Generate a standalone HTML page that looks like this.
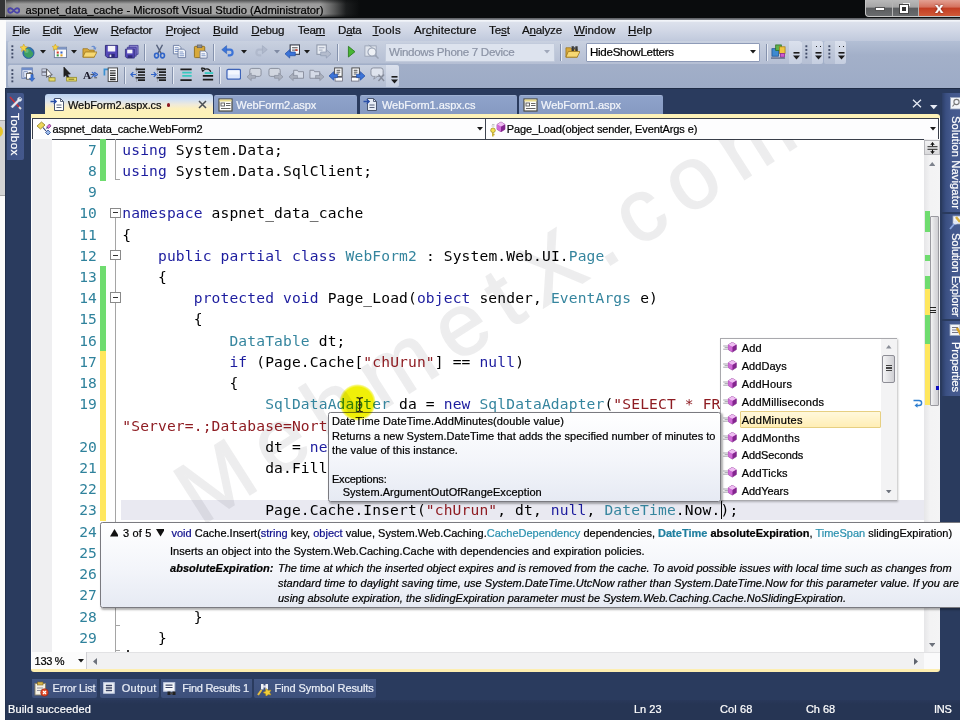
<!DOCTYPE html>
<html lang="en"><head><meta charset="utf-8">
<title>aspnet_data_cache - Microsoft Visual Studio (Administrator)</title>
<style>

html,body{margin:0;padding:0}
body{width:960px;height:720px;overflow:hidden;position:relative;background:#2a3b5e;font-family:"Liberation Sans","DejaVu Sans",sans-serif;font-size:11.5px;color:#000}
.a{position:absolute;box-sizing:border-box}
.t{position:absolute;white-space:pre;display:block;-webkit-text-stroke:.22px}
u{text-decoration:underline;text-underline-offset:1px}
.code{position:absolute;white-space:pre;font-family:"DejaVu Sans Mono","Liberation Mono",monospace;font-size:14.6px;letter-spacing:0.141px;color:#000;height:21.22px;line-height:21.22px;left:122.3px}
.ln{position:absolute;white-space:pre;font-family:"DejaVu Sans Mono","Liberation Mono",monospace;font-size:14.6px;letter-spacing:0.141px;color:#2f829c;height:21.22px;line-height:21.22px;left:60px;width:37px;text-align:right}
.k{color:#1c1c9e}.c{color:#35859e}.s{color:#8e1c22}
.tip{font-size:11.3px}
.bi{font-weight:bold;font-style:italic}
.i{font-style:italic}
.b{font-weight:bold}
.kw{color:#10108c}.ty{color:#2b91af}

</style></head>
<body>
<div class="a" style="left:0px;top:20.2px;width:6px;height:700px;background:#fbfbfb"></div>
<div class="a" style="left:0px;top:120px;width:5px;height:76px;background:#d4d4d4;border-top:1px solid #aaa;border-bottom:1px solid #aaa"></div>
<div class="a" style="left:-8px;top:125.5px;width:10.5px;height:11px;background:#e8c62c;border-radius:50%"></div>
<div class="a" style="left:5.3px;top:88px;width:1.2px;height:632px;background:#22304d"></div>
<div class="a" style="left:0px;top:0px;width:960px;height:19px;background:#0a0c0d"></div>
<div class="a" style="left:0px;top:0px;width:420px;height:19px;background:linear-gradient(90deg,#6e6e6e 0,#9c9c9c 14px,#a6a6a6 200px,#9c9c9c 320px,#5a5b5b 334px,#1c1e1f 346px,#0a0c0d 360px)"></div>
<div class="a" style="left:0px;top:0px;width:420px;height:19px;background:linear-gradient(180deg,rgba(10,12,13,.55) 0,rgba(10,12,13,0) 4px,rgba(10,12,13,0) 14px,rgba(10,12,13,.6) 17px)"></div>
<svg class="a" style="left:6.8px;top:6px" width="13.5" height="9" viewBox="0 0 13.5 9"><path d="M3.500 2.200c2.700 0 3.800 4.600 6.500 4.600a2.300 2.300 0 0 0 0-4.600c-2.700 0-3.800 4.600-6.500 4.600a2.300 2.300 0 0 1 0-4.600z" fill="none" stroke="#4a44a8" stroke-width="1.900"/></svg>
<span class="t" style="left:25.5px;top:1.8px;height:16px;line-height:16px;font-size:11.2px;color:#000;letter-spacing:0.006px;">aspnet_data_cache - Microsoft Visual Studio (Administrator)</span>
<div class="a" style="left:864.5px;top:0px;width:96px;height:17.3px;background:#b4b4b4;border-left:1.200px solid #c4c4c4;border-bottom:1.200px solid #c4c4c4;border-bottom-left-radius:4px"></div>
<div class="a" style="left:866px;top:0px;width:26px;height:16px;background:linear-gradient(180deg,#b9b9b9 0,#a5a5a5 45%,#5b5d5f 50%,#6a6c6e 100%);border-bottom-left-radius:3px"></div>
<div class="a" style="left:893px;top:0px;width:25px;height:16px;background:linear-gradient(180deg,#b9b9b9 0,#a5a5a5 45%,#5b5d5f 50%,#6a6c6e 100%)"></div>
<div class="a" style="left:919px;top:0px;width:41px;height:16px;background:linear-gradient(180deg,#e3a092 0,#d4705c 45%,#c23c22 50%,#d05a38 100%)"></div>
<div class="a" style="left:875px;top:7px;width:10px;height:4px;background:#fff;border:1px solid #555"></div>
<div class="a" style="left:899.5px;top:5px;width:8px;height:8px;border:2px solid #fff;outline:1px solid #444;background:#333"></div>
<div class="a" style="left:902.5px;top:2.5px;width:7px;height:3px;border-top:1.5px solid #eee;border-right:1.5px solid #eee"></div>
<span class="t" style="left:935px;top:0.5px;height:14px;line-height:14px;font-size:15px;color:#fff;font-weight:bold;text-shadow:0 0 2px #400;">x</span>
<div class="a" style="left:0px;top:17px;width:960px;height:1.5px;background:#0a0c0d"></div>
<div class="a" style="left:0px;top:18.4px;width:960px;height:1.9px;background:linear-gradient(180deg,#55585b,#8b8f94)"></div>
<div class="a" style="left:0px;top:0px;width:4.5px;height:17.3px;background:#343536"></div>
<div class="a" style="left:4.5px;top:0px;width:1.2px;height:17.3px;background:#9a9a9a"></div>
<div class="a" style="left:5.5px;top:20.2px;width:954.5px;height:20.8px;background:linear-gradient(180deg,#f4f6fa 0,#eef1f7 1.300px,#dce1ec 2.500px,#d3d9e7 45%,#c0c9dc 100%)"></div>
<span class="t" style="left:12.4px;top:22px;height:16px;line-height:16px;font-size:11.6px;color:#101010;letter-spacing:-0.300px;"><u>F</u>ile</span>
<span class="t" style="left:42.6px;top:22px;height:16px;line-height:16px;font-size:11.6px;color:#101010;letter-spacing:-0.296px;"><u>E</u>dit</span>
<span class="t" style="left:73.9px;top:22px;height:16px;line-height:16px;font-size:11.6px;color:#101010;letter-spacing:-0.259px;"><u>V</u>iew</span>
<span class="t" style="left:110.7px;top:22px;height:16px;line-height:16px;font-size:11.6px;color:#101010;letter-spacing:-0.291px;"><u>R</u>efactor</span>
<span class="t" style="left:165.7px;top:22px;height:16px;line-height:16px;font-size:11.6px;color:#101010;letter-spacing:-0.300px;"><u>P</u>roject</span>
<span class="t" style="left:213px;top:22px;height:16px;line-height:16px;font-size:11.6px;color:#101010;letter-spacing:-0.159px;"><u>B</u>uild</span>
<span class="t" style="left:251.3px;top:22px;height:16px;line-height:16px;font-size:11.6px;color:#101010;letter-spacing:-0.254px;"><u>D</u>ebug</span>
<span class="t" style="left:297.7px;top:22px;height:16px;line-height:16px;font-size:11.6px;color:#101010;letter-spacing:-0.269px;">Tea<u>m</u></span>
<span class="t" style="left:338px;top:22px;height:16px;line-height:16px;font-size:11.6px;color:#101010;letter-spacing:-0.250px;">D<u>a</u>ta</span>
<span class="t" style="left:372.5px;top:22px;height:16px;line-height:16px;font-size:11.6px;color:#101010;letter-spacing:0.300px;"><u>T</u>ools</span>
<span class="t" style="left:414px;top:22px;height:16px;line-height:16px;font-size:11.6px;color:#101010;letter-spacing:0.053px;">Ar<u>c</u>hitecture</span>
<span class="t" style="left:489px;top:22px;height:16px;line-height:16px;font-size:11.6px;color:#101010;letter-spacing:-0.070px;">Te<u>s</u>t</span>
<span class="t" style="left:522px;top:22px;height:16px;line-height:16px;font-size:11.6px;color:#101010;letter-spacing:-0.181px;">A<u>n</u>alyze</span>
<span class="t" style="left:574px;top:22px;height:16px;line-height:16px;font-size:11.6px;color:#101010;letter-spacing:0.042px;"><u>W</u>indow</span>
<span class="t" style="left:628px;top:22px;height:16px;line-height:16px;font-size:11.6px;color:#101010;letter-spacing:0.035px;"><u>H</u>elp</span>
<div class="a" style="left:5.5px;top:41px;width:954.5px;height:47px;background:linear-gradient(180deg,#b3bfd5 0,#a3b0c9 30%,#9dabc6 100%)"></div>
<div class="a" style="left:8px;top:41px;width:790px;height:22.5px;background:linear-gradient(180deg,#c9d1e0 0,#bec7d9 50%,#b5bfd4 100%);border-radius:2px"></div>
<div class="a" style="left:801px;top:41px;width:22px;height:22.5px;background:linear-gradient(180deg,#c9d1e0 0,#bec7d9 50%,#b5bfd4 100%);border-radius:2px"></div>
<div class="a" style="left:824px;top:41px;width:22px;height:22.5px;background:linear-gradient(180deg,#c9d1e0 0,#bec7d9 50%,#b5bfd4 100%);border-radius:2px"></div>
<div class="a" style="left:789px;top:41px;width:13px;height:22.5px;background:linear-gradient(180deg,#dbe1ed,#c5cee0);border-radius:0 3px 3px 0"></div>
<div class="a" style="left:812px;top:41px;width:11px;height:22.5px;background:linear-gradient(180deg,#dbe1ed,#c5cee0);border-radius:0 3px 3px 0"></div>
<div class="a" style="left:835px;top:41px;width:11px;height:22.5px;background:linear-gradient(180deg,#dbe1ed,#c5cee0);border-radius:0 3px 3px 0"></div>
<div class="a" style="left:8px;top:64.5px;width:391px;height:22.5px;background:linear-gradient(180deg,#c9d1e0 0,#bec7d9 50%,#b5bfd4 100%);border-radius:2px"></div>
<div class="a" style="left:386px;top:64.5px;width:13px;height:22.5px;background:linear-gradient(180deg,#dbe1ed,#c5cee0);border-radius:0 3px 3px 0"></div>
<div class="a" style="left:8px;top:63.2px;width:391px;height:1.3px;background:#aab6cc"></div>
<svg class="a" style="left:11px;top:45px" width="3" height="15" viewBox="0 0 3 15"><rect x="0.4" y="0.3" width="1.900" height="1.900" fill="#3f4a66"/><rect x="0.4" y="4" width="1.900" height="1.900" fill="#3f4a66"/><rect x="0.4" y="7.7" width="1.900" height="1.900" fill="#3f4a66"/><rect x="0.4" y="11.4" width="1.900" height="1.900" fill="#3f4a66"/></svg>
<svg class="a" style="left:11px;top:68.5px" width="3" height="15" viewBox="0 0 3 15"><rect x="0.4" y="0.3" width="1.900" height="1.900" fill="#3f4a66"/><rect x="0.4" y="4" width="1.900" height="1.900" fill="#3f4a66"/><rect x="0.4" y="7.7" width="1.900" height="1.900" fill="#3f4a66"/><rect x="0.4" y="11.4" width="1.900" height="1.900" fill="#3f4a66"/></svg>
<svg class="a" style="left:20px;top:44.2px" width="15" height="15" viewBox="0 0 16 16"><circle cx="9" cy="9.500" r="6" fill="#2f74b4"/><path d="M4.500 7.500c1-3 5-3.500 6.500-1.500s3.500 2.500 3 5-3.500 4.500-6 3.500-4.500-3.500-3.500-7z" fill="#3f9f62"/><circle cx="9" cy="9.500" r="6" fill="none" stroke="#28598f" stroke-width=".8"/><circle cx="7" cy="7.500" r="2.200" fill="#8fd0a0" opacity=".5"/><path d="M4 0l1.2 2.6L8 3.2 5.8 5 6.4 8 4 6.4 1.6 8 2.2 5 0 3.2l2.8-.6z" fill="#f6d345" stroke="#c59a1b" stroke-width=".5"/></svg>
<svg class="a" style="left:40.2px;top:49.8px" width="6" height="4" viewBox="0 0 6 4"><path d="M0 0h6l-3 3.6z" fill="#1b1b1b"/></svg>
<svg class="a" style="left:52px;top:44.2px" width="15" height="15" viewBox="0 0 16 16"><rect x="2.5" y="3.5" width="13" height="11" fill="#fdfdfd" stroke="#6f7f9f"/><rect x="2.5" y="3.5" width="13" height="2.5" fill="#7c94c4"/><rect x="5" y="8" width="2.2" height="2.2" fill="#d43b2b"/><rect x="9" y="8" width="2.2" height="2.2" fill="#3865c8"/><rect x="5" y="11" width="2.2" height="2.2" fill="#3c9a3c"/><rect x="9" y="11" width="2.2" height="2.2" fill="#e0a020"/><path d="M3.5 0l1 2.2 2.4.4-1.8 1.6.5 2.5L3.5 5.4 1.4 6.7l.5-2.5L.1 2.6l2.4-.4z" fill="#f6d345" stroke="#c59a1b" stroke-width=".5"/></svg>
<svg class="a" style="left:71.3px;top:49.8px" width="6" height="4" viewBox="0 0 6 4"><path d="M0 0h6l-3 3.6z" fill="#1b1b1b"/></svg>
<svg class="a" style="left:82px;top:44.2px" width="15" height="15" viewBox="0 0 16 16"><path d="M1 5h5l1.5 1.5H13V14H1z" fill="#d9a93a" stroke="#9a741d" stroke-width=".8"/><path d="M3.5 8.5H16L13 14H1z" fill="#f7d873" stroke="#9a741d" stroke-width=".8"/><path d="M9.5 3.5c2-2.5 4.5-2 5 .5l1-.5-1.2 3-2.6-1.6 1.2-.3c-.5-1.2-1.8-1.5-3.4-1.1z" fill="#6b8fd0"/></svg>
<svg class="a" style="left:104px;top:44.2px" width="15" height="15" viewBox="0 0 16 16"><path d="M1.5 1.5h13v13h-11l-2-2z" fill="#5448b8" stroke="#2e2a78"/><rect x="4" y="2" width="8" height="6" fill="#f4f4fa"/><rect x="5" y="10.5" width="6.5" height="4" fill="#2e2a78"/><rect x="6" y="11.3" width="1.8" height="2.6" fill="#e8e8f4"/></svg>
<svg class="a" style="left:124px;top:44.2px" width="15" height="15" viewBox="0 0 16 16"><path d="M5.5 1.5h9.5v9.5h-9.5z" fill="#8f88d0" stroke="#3b3690" stroke-width=".8"/><path d="M3.5 3.5h9.5v9.5h-9.5z" fill="#7268c6" stroke="#3b3690" stroke-width=".8"/><path d="M1.5 5.5h9.5v9.5h-8l-1.5-1.5z" fill="#5448b8" stroke="#2e2a78" stroke-width=".8"/><rect x="3.4" y="6" width="5.6" height="4" fill="#f4f4fa"/><rect x="4" y="12" width="5" height="3" fill="#2e2a78"/></svg>
<div class="a" style="left:144px;top:43.5px;width:2px;height:17px;border-left:1px solid #8592ad;border-right:1px solid #e6ebf4"></div>
<svg class="a" style="left:151.5px;top:44.2px" width="15" height="15" viewBox="0 0 16 16"><path d="M4.800 .8l5.200 9.700M11.200 .8L6 10.500" stroke="#55617c" stroke-width="1.500" fill="none"/><ellipse cx="4.800" cy="12.300" rx="2.100" ry="2.500" fill="none" stroke="#2f63c8" stroke-width="1.700"/><ellipse cx="11.200" cy="12.300" rx="2.100" ry="2.500" fill="none" stroke="#2f63c8" stroke-width="1.700"/></svg>
<svg class="a" style="left:172px;top:44.2px" width="15" height="15" viewBox="0 0 16 16"><path d="M1.5 1.5h6l2 2v7h-8z" fill="#f6f8fc" stroke="#66779c" stroke-width=".9"/><path d="M3 4h4M3 6h5M3 8h5" stroke="#5b79b8" stroke-width=".8"/><path d="M6.5 5.5h6l2 2v7h-8z" fill="#f6f8fc" stroke="#66779c" stroke-width=".9"/><path d="M8 8.5h4M8 10.5h5M8 12.500h5" stroke="#5b79b8" stroke-width=".8"/></svg>
<svg class="a" style="left:192.5px;top:44.2px" width="15" height="15" viewBox="0 0 16 16"><rect x="1.5" y="2.5" width="11" height="12" rx="1" fill="#d8a93a" stroke="#8a6714" stroke-width=".9"/><rect x="4.500" y="1" width="5" height="3" fill="#8a8f9a" stroke="#555" stroke-width=".6"/><path d="M7.500 7.500h5.500l2 2v5.500h-7.500z" fill="#f8f9fc" stroke="#66779c" stroke-width=".9"/><path d="M9 10.500h4M9 12.500h4.500" stroke="#5b79b8" stroke-width=".8"/></svg>
<div class="a" style="left:213px;top:43.5px;width:2px;height:17px;border-left:1px solid #8592ad;border-right:1px solid #e6ebf4"></div>
<svg class="a" style="left:220.5px;top:44.2px" width="15" height="15" viewBox="0 0 16 16"><path d="M5.500 6h4.200c3.300 0 3.800 5.800 0 6.200h-2.500" fill="none" stroke="#3b73d8" stroke-width="2.300"/><path d="M.8 6l5.200-4.300v8.600z" fill="#3b73d8" stroke="#2456b0" stroke-width=".5"/></svg>
<svg class="a" style="left:240.5px;top:49.8px" width="6" height="4" viewBox="0 0 6 4"><path d="M0 0h6l-3 3.6z" fill="#1b1b1b"/></svg>
<svg class="a" style="left:253px;top:44.2px" width="15" height="15" viewBox="0 0 16 16"><path d="M10.500 6H6.300c-3.300 0-3.800 5.800 0 6.200h2.500" fill="none" stroke="#b0b9cc" stroke-width="2.300"/><path d="M15.200 6L10 1.700v8.600z" fill="#b0b9cc" stroke="#98a2b8" stroke-width=".5"/></svg>
<svg class="a" style="left:273.7px;top:49.8px" width="6" height="4" viewBox="0 0 6 4"><path d="M0 0h6l-3 3.6z" fill="#7f8aa3"/></svg>
<svg class="a" style="left:285px;top:44.2px" width="15" height="15" viewBox="0 0 16 16"><rect x="5.500" y="1" width="10" height="10" fill="#fafbfd" stroke="#3a3f4c" stroke-width="1.200"/><path d="M7.500 4h6M7.500 6.500h4" stroke="#444" stroke-width="1"/><rect x="11" y="5.500" width="2.500" height="2" fill="#c04030"/><path d="M0 10.500l5-4.500v2.500h6v4h-6v2.500z" fill="#3b73d8" stroke="#1f4aa0" stroke-width=".7"/></svg>
<svg class="a" style="left:304.3px;top:49.8px" width="6" height="4" viewBox="0 0 6 4"><path d="M0 0h6l-3 3.6z" fill="#1b1b1b"/></svg>
<svg class="a" style="left:316px;top:44.2px" width="15" height="15" viewBox="0 0 16 16"><rect x="1" y="1" width="10" height="10" fill="#e8ecf3" stroke="#8d96a8" stroke-width="1.100"/><path d="M3 4h6M3 6.500h4" stroke="#9aa3b5" stroke-width="1"/><path d="M16 10.500l-5-4.500v2.500h-6v4h6v2.500z" fill="#b4bccd" stroke="#8d98b0" stroke-width=".7"/></svg>
<div class="a" style="left:337px;top:43.5px;width:2px;height:17px;border-left:1px solid #8592ad;border-right:1px solid #e6ebf4"></div>
<svg class="a" style="left:347px;top:44.2px" width="15" height="15" viewBox="0 0 16 16"><path d="M1.500 2.500l7 5.700-7 5.700z" fill="#48b634" stroke="#2a7a1c" stroke-width=".9"/></svg>
<svg class="a" style="left:364px;top:44.2px" width="15" height="15" viewBox="0 0 16 16"><rect x="1" y="2" width="12" height="11" fill="#dfe4ed" stroke="#98a1b3" stroke-width=".9"/><circle cx="8.500" cy="8.500" r="4.300" fill="#eef1f6" stroke="#98a1b3" stroke-width="1.100"/><path d="M11.500 11.500l4 4" stroke="#98a1b3" stroke-width="1.600"/><path d="M5 1l4 3" stroke="#98a1b3" stroke-width="1"/></svg>
<div class="a" style="left:385px;top:43px;width:169.5px;height:18.5px;background:#dde3ee;border:1px solid #c2cbdc;border-radius:1px"></div>
<span class="t" style="left:389px;top:43.8px;height:16px;line-height:16px;font-size:11.6px;color:#8b93a5;letter-spacing:-0.300px;">Windows Phone 7 Device</span>
<svg class="a" style="left:543.5px;top:50px" width="6" height="4" viewBox="0 0 6 4"><path d="M0 0h6l-3 3.6z" fill="#a0a8ba"/></svg>
<div class="a" style="left:560px;top:43.5px;width:2px;height:17px;border-left:1px solid #8592ad;border-right:1px solid #e6ebf4"></div>
<svg class="a" style="left:565px;top:44.2px" width="15" height="15" viewBox="0 0 16 16"><path d="M1 4h5l1.500 1.500H13V14H1z" fill="#d9a93a" stroke="#9a741d" stroke-width=".8"/><path d="M3.500 8H16L13 14H1z" fill="#f7d873" stroke="#9a741d" stroke-width=".8"/><path d="M7 2.500h2.500v5H7zM11 2.500h2.500v5H11z" fill="#3a3a3a"/><rect x="9" y="3.500" width="2.500" height="2" fill="#555"/></svg>
<div class="a" style="left:586px;top:43px;width:173.5px;height:18.5px;background:#fff;border:1px solid #8e9bb8;border-radius:1px"></div>
<span class="t" style="left:590px;top:43.8px;height:16px;line-height:16px;font-size:11.6px;color:#000;letter-spacing:-0.300px;">HideShowLetters</span>
<svg class="a" style="left:749.5px;top:50px" width="6" height="4" viewBox="0 0 6 4"><path d="M0 0h6l-3 3.6z" fill="#1b1b1b"/></svg>
<div class="a" style="left:766px;top:43.5px;width:2px;height:17px;border-left:1px solid #8592ad;border-right:1px solid #e6ebf4"></div>
<svg class="a" style="left:771px;top:44.2px" width="15" height="15" viewBox="0 0 16 16"><rect x="1" y="5" width="7" height="8" fill="#3e8ad0" stroke="#1c4f90" stroke-width=".8"/><rect x="5" y="1" width="6" height="6" fill="#5fb04a" stroke="#2a6f22" stroke-width=".8"/><rect x="9" y="3" width="6" height="7" fill="#f0c640" stroke="#a07c12" stroke-width=".8"/><rect x="10" y="10" width="4.500" height="4" fill="#d05ad0" stroke="#8a2e8a" stroke-width=".8"/><path d="M0 15h15" stroke="#4a5676" stroke-width="1.200"/></svg>
<svg class="a" style="left:792.5px;top:51.5px" width="7" height="8" viewBox="0 0 7 8"><rect x="0.5" y="0" width="6" height="1.6" fill="#1b1b1b"/><path d="M0 3.6h7l-3.5 3.8z" fill="#1b1b1b"/></svg>
<svg class="a" style="left:805px;top:45px" width="3" height="15" viewBox="0 0 3 15"><rect x="0.4" y="0.3" width="1.900" height="1.900" fill="#3f4a66"/><rect x="0.4" y="4" width="1.900" height="1.900" fill="#3f4a66"/><rect x="0.4" y="7.7" width="1.900" height="1.900" fill="#3f4a66"/><rect x="0.4" y="11.4" width="1.900" height="1.900" fill="#3f4a66"/></svg>
<svg class="a" style="left:814.5px;top:51.5px" width="7" height="8" viewBox="0 0 7 8"><rect x="0.5" y="0" width="6" height="1.6" fill="#1b1b1b"/><path d="M0 3.6h7l-3.5 3.8z" fill="#1b1b1b"/></svg>
<div class="a" style="left:815.5px;top:45.5px;width:1.6px;height:1.6px;background:#222"></div>
<div class="a" style="left:819.5px;top:45.5px;width:1.6px;height:1.6px;background:#222"></div>
<svg class="a" style="left:828px;top:45px" width="3" height="15" viewBox="0 0 3 15"><rect x="0.4" y="0.3" width="1.900" height="1.900" fill="#3f4a66"/><rect x="0.4" y="4" width="1.900" height="1.900" fill="#3f4a66"/><rect x="0.4" y="7.7" width="1.900" height="1.900" fill="#3f4a66"/><rect x="0.4" y="11.4" width="1.900" height="1.900" fill="#3f4a66"/></svg>
<svg class="a" style="left:837.5px;top:51.5px" width="7" height="8" viewBox="0 0 7 8"><rect x="0.5" y="0" width="6" height="1.6" fill="#1b1b1b"/><path d="M0 3.6h7l-3.5 3.8z" fill="#1b1b1b"/></svg>
<div class="a" style="left:838.5px;top:45.5px;width:1.6px;height:1.6px;background:#222"></div>
<div class="a" style="left:842.5px;top:45.5px;width:1.6px;height:1.6px;background:#222"></div>
<svg class="a" style="left:21px;top:67.4px" width="15" height="15" viewBox="0 0 16 16"><rect x="1" y="1" width="11" height="11" fill="#f5f7fb" stroke="#5b73a8" stroke-width="1"/><rect x="1" y="1" width="11" height="2.500" fill="#6f8cc8"/><rect x="3" y="5" width="4" height="6" fill="#dfe6f4" stroke="#5b73a8" stroke-width=".7"/><path d="M8 6h3M8 8h3" stroke="#444" stroke-width=".9"/><rect x="6" y="7" width="6" height="6" fill="#fff" stroke="#444" stroke-width=".8"/><path d="M13 8v4h-1.800l3 3.500 3-3.500H15.500V8z" transform="translate(-2.500,0)" fill="#3b73d8" stroke="#1f4aa0" stroke-width=".5"/></svg>
<svg class="a" style="left:41px;top:67.4px" width="15" height="15" viewBox="0 0 16 16"><rect x="1" y="2" width="5" height="3" fill="#c9d2e4" stroke="#667" stroke-width=".7"/><rect x="1" y="6" width="5" height="3" fill="#c9d2e4" stroke="#667" stroke-width=".7"/><path d="M6 2l6 6.500-2.800.2 1.600 3-1.500.7-1.500-3.100L6 11z" fill="#fff" stroke="#333" stroke-width=".8"/><rect x="8.500" y="11.500" width="6.500" height="3.500" fill="#e8dc6a" stroke="#8d8420" stroke-width=".8"/></svg>
<svg class="a" style="left:62px;top:67.4px" width="15" height="15" viewBox="0 0 16 16"><path d="M2 0l7 7.500-3.200.2 1.800 3.500-1.700.8-1.700-3.600L2 10.500z" fill="#222" stroke="#111" stroke-width=".6"/><rect x="5" y="11" width="10.500" height="4" fill="#e8dc6a" stroke="#8d8420" stroke-width=".8"/><path d="M7 13h6" stroke="#6e671a" stroke-width="1"/></svg>
<svg class="a" style="left:83px;top:67.4px" width="15" height="15" viewBox="0 0 16 16"><text x="0" y="13" font-family="Liberation Serif,serif" font-weight="bold" font-size="12" fill="#1a1a2a">A</text><path d="M8 8h5M8 11.500h2M12 11.500h3" stroke="#333" stroke-width=".8" fill="none"/><path d="M9.500 5.500l3 2.500-3 2.500M12 5.500l3.500 2.500-3.500 2.500" fill="none" stroke="#2f63c8" stroke-width="1.300"/></svg>
<svg class="a" style="left:103px;top:67.4px" width="15" height="15" viewBox="0 0 16 16"><path d="M1.500 9V2.500H6" fill="none" stroke="#3a8fd0" stroke-width="1.800"/><rect x="5.500" y="1" width="10" height="14.500" fill="#fbfcfe" stroke="#444" stroke-width="1"/><path d="M7.500 4h6M7.500 6.500h6M7.500 9h6M7.500 11.500h6M7.500 13.500h6" stroke="#222" stroke-width="1.300"/></svg>
<div class="a" style="left:124px;top:66.8px;width:2px;height:17px;border-left:1px solid #8592ad;border-right:1px solid #e6ebf4"></div>
<svg class="a" style="left:130px;top:67.4px" width="15" height="15" viewBox="0 0 16 16"><path d="M6 2.500h10M8.500 5.500H16M8.500 8.500H16M6 11.500h10M8.500 14h7.500" stroke="#1c1c1c" stroke-width="1.700"/><path d="M6.500 8H1M3.500 5.500L1 8l2.500 2.500" fill="none" stroke="#2f63c8" stroke-width="1.300"/><path d="M7 .5v15" stroke="#555" stroke-width=".6" stroke-dasharray="1 1"/></svg>
<svg class="a" style="left:151px;top:67.4px" width="15" height="15" viewBox="0 0 16 16"><path d="M6 2.500h10M8.500 5.500H16M8.500 8.500H16M6 11.500h10M8.500 14h7.500" stroke="#1c1c1c" stroke-width="1.700"/><path d="M0 8h5.500M3 5.500L5.500 8 3 10.500" fill="none" stroke="#2f63c8" stroke-width="1.300"/><path d="M7 .5v15" stroke="#555" stroke-width=".6" stroke-dasharray="1 1"/></svg>
<div class="a" style="left:172px;top:66.8px;width:2px;height:17px;border-left:1px solid #8592ad;border-right:1px solid #e6ebf4"></div>
<svg class="a" style="left:179px;top:67.4px" width="15" height="15" viewBox="0 0 16 16"><path d="M1.500 2.500h12M1.500 14h12" stroke="#1c1c1c" stroke-width="1.700"/><path d="M3.500 6h10M3.500 9.500h10" stroke="#38c8c0" stroke-width="2"/></svg>
<svg class="a" style="left:199.5px;top:67.4px" width="15" height="15" viewBox="0 0 16 16"><path d="M3 9.500h11M3 13.500h11" stroke="#1c1c1c" stroke-width="1.700"/><path d="M5 6.500h9" stroke="#38c8c0" stroke-width="2"/><path d="M3 5l-1.500-4 M1.500 1l4 .8M3 4.500c2-3.500 7-3.500 8.500.5" fill="none" stroke="#1c1c1c" stroke-width="1.300"/></svg>
<div class="a" style="left:219px;top:66.8px;width:2px;height:17px;border-left:1px solid #8592ad;border-right:1px solid #e6ebf4"></div>
<svg class="a" style="left:226px;top:67.4px" width="15" height="15" viewBox="0 0 16 16"><rect x="1" y="2.500" width="14.500" height="10.500" rx="1.500" fill="#dfe9fb" stroke="#3d63b8" stroke-width="1.300"/><rect x="2.500" y="4" width="11.500" height="4" fill="#f7faff" opacity=".8"/></svg>
<svg class="a" style="left:247px;top:67.4px" width="15" height="15" viewBox="0 0 16 16"><rect x="3" y="1.500" width="12" height="8.500" rx="2" fill="#d2d7e0" stroke="#878d9c" stroke-width="1"/><path d="M0 10.500l4.500-4v2.500h4.500v3h-4.500v2.500z" fill="#aab0bd" stroke="#878d9c" stroke-width=".7"/></svg>
<svg class="a" style="left:267.5px;top:67.4px" width="15" height="15" viewBox="0 0 16 16"><rect x="1" y="1.500" width="12" height="8.500" rx="2" fill="#d2d7e0" stroke="#878d9c" stroke-width="1"/><path d="M16 10.500l-4.500-4v2.500H7v3h4.500v2.500z" fill="#aab0bd" stroke="#878d9c" stroke-width=".7"/></svg>
<svg class="a" style="left:288.5px;top:67.4px" width="15" height="15" viewBox="0 0 16 16"><path d="M5 3.500h4l1 1.500h5.500v7H5z" fill="#d5dbe7" stroke="#878d9c" stroke-width="1"/><path d="M0 10.500l4.500-4v2.500h4.500v3h-4.500v2.500z" fill="#aab0bd" stroke="#878d9c" stroke-width=".7"/></svg>
<svg class="a" style="left:308.5px;top:67.4px" width="15" height="15" viewBox="0 0 16 16"><path d="M1 3.500h4l1 1.500h5.500v7H1z" fill="#d5dbe7" stroke="#878d9c" stroke-width="1"/><path d="M16 10.500l-4.500-4v2.500H7v3h4.500v2.500z" fill="#aab0bd" stroke="#878d9c" stroke-width=".7"/></svg>
<svg class="a" style="left:329px;top:67.4px" width="15" height="15" viewBox="0 0 16 16"><rect x="6" y="1" width="8" height="9" fill="#fbfcfe" stroke="#444" stroke-width="1"/><path d="M8 3.500h4M8 5.500h4M8 7.500h3" stroke="#333" stroke-width=".9"/><rect x="6.500" y="11" width="8" height="4" fill="#fbfcfe" stroke="#667" stroke-width=".8"/><path d="M0 9.500l5-4.500v2.700h4v3.600h-4v2.700z" fill="#3b73d8" stroke="#1f4aa0" stroke-width=".7"/></svg>
<svg class="a" style="left:350px;top:67.4px" width="15" height="15" viewBox="0 0 16 16"><rect x="2" y="1" width="8" height="9" fill="#fbfcfe" stroke="#444" stroke-width="1"/><path d="M4 3.500h4M4 5.500h4M4 7.500h3" stroke="#333" stroke-width=".9"/><rect x="1.500" y="11" width="8" height="4" fill="#fbfcfe" stroke="#667" stroke-width=".8"/><path d="M16 9.500l-5-4.500v2.700h-4v3.600h4v2.700z" fill="#3b73d8" stroke="#1f4aa0" stroke-width=".7"/></svg>
<svg class="a" style="left:370px;top:67.4px" width="15" height="15" viewBox="0 0 16 16"><rect x="1" y="1" width="13" height="9" rx="2.500" fill="#dfe4ee" stroke="#878d9c" stroke-width="1"/><path d="M5 10l-1 3 4-3" fill="#dfe4ee" stroke="#878d9c" stroke-width=".9"/><path d="M9 8l6 7M15 8l-6 7" stroke="#878d9c" stroke-width="1.500"/></svg>
<svg class="a" style="left:391.2px;top:75.5px" width="7" height="8" viewBox="0 0 7 8"><rect x="0.5" y="0" width="6" height="1.6" fill="#1b1b1b"/><path d="M0 3.6h7l-3.5 3.8z" fill="#1b1b1b"/></svg>
<div class="a" style="left:6px;top:87.5px;width:954px;height:1.2px;background:#1f2c46"></div>
<div class="a" style="left:7.2px;top:93px;width:17.3px;height:66.7px;background:linear-gradient(90deg,#3f5486,#44588c);border-radius:0 2px 2px 0"></div>
<svg class="a" style="left:8.3px;top:95px" width="15" height="16" viewBox="0 0 15 16"><path d="M2 2l9 10" stroke="#c8323c" stroke-width="1.600"/><path d="M11 12l2 2" stroke="#ddd" stroke-width="2"/><path d="M13 2.500c-2-1-4 .5-3.500 2.500L3 11.500l1.500 1.500L11 6.500c2 .5 3.500-1.500 2.500-3.500l-1.500 1.500-1-1z" fill="#e8ecf4" stroke="#cfd6e4" stroke-width=".4"/></svg>
<span class="t" style="left:21.6px;top:113.3px;height:14px;line-height:14px;font-size:11.8px;color:#fff;letter-spacing:0.300px;transform-origin:0 0;transform:rotate(90deg);">Toolbox</span>
<div class="a" style="left:45px;top:94.3px;width:168px;height:21px;background:linear-gradient(180deg,#bcd3f1 0,#d3e1f3 28%,#efeadb 50%,#fdf0bc 70%,#fdf2b8 100%);border-radius:3px 3px 0 0"></div>
<span class="t" style="left:68px;top:96.5px;height:16px;line-height:16px;font-size:11px;color:#0c0c0c;letter-spacing:-0.066px;">WebForm2.aspx.cs</span>
<div class="a" style="left:166.5px;top:103.2px;width:3.8px;height:3.8px;background:#8e1a22;border-radius:50%"></div>
<svg class="a" style="left:197.5px;top:100.2px" width="9" height="9" viewBox="0 0 9 9"><path d="M1 1l7 7M8 1l-7 7" stroke="#4b4f55" stroke-width="1.500"/></svg>
<svg class="a" style="left:49.5px;top:97px" width="15" height="15" viewBox="0 0 15 15"><path d="M4.500 1.500h6l3 3v9h-9z" fill="#fff" stroke="#4a5670" stroke-width="1"/><path d="M10.500 1.500v3h3" fill="none" stroke="#4a5670" stroke-width=".9"/><path d="M.5 4.500h5.500M3.800 2.200l2.400 2.300-2.400 2.300" fill="none" stroke="#2a4fa8" stroke-width="1.300"/><path d="M6.500 8h5M6.500 10.500h5" stroke="#4a5670" stroke-width=".9"/></svg>
<div class="a" style="left:214.3px;top:95px;width:142.7px;height:20px;background:linear-gradient(180deg,#a9b9d8 0,#8fa3ca 1.500px,#8a9ec6 50%,#8599c2 100%);border-radius:2px 2px 0 0"></div>
<svg class="a" style="left:218px;top:97.5px" width="15" height="14" viewBox="0 0 15 14"><rect x="1" y="1" width="13" height="12" fill="#fdfdfb" stroke="#4c4c44" stroke-width="1.200"/><rect x="1.500" y="1.500" width="12" height="2" fill="#e9dc8a"/><rect x="3" y="5" width="3.500" height="3" fill="none" stroke="#555" stroke-width=".9"/><path d="M8 5.500h4.500M8 7.500h4.500M3 10.500h9.500" stroke="#555" stroke-width=".9"/></svg>
<span class="t" style="left:236.3px;top:96.5px;height:16px;line-height:16px;font-size:11px;color:#f2f5fa;letter-spacing:-0.038px;">WebForm2.aspx</span>
<div class="a" style="left:359.5px;top:95px;width:157.5px;height:20px;background:linear-gradient(180deg,#a9b9d8 0,#8fa3ca 1.500px,#8a9ec6 50%,#8599c2 100%);border-radius:2px 2px 0 0"></div>
<svg class="a" style="left:362.5px;top:97px" width="15" height="15" viewBox="0 0 15 15"><path d="M4.500 1.500h6l3 3v9h-9z" fill="#e8edf6" stroke="#4a5670" stroke-width="1"/><path d="M10.500 1.500v3h3" fill="none" stroke="#4a5670" stroke-width=".9"/><path d="M.5 4.500h5.500M3.800 2.200l2.400 2.300-2.400 2.300" fill="none" stroke="#2a4fa8" stroke-width="1.300"/><path d="M6.500 8h5M6.500 10.500h5" stroke="#4a5670" stroke-width=".9"/></svg>
<span class="t" style="left:382px;top:96.5px;height:16px;line-height:16px;font-size:11px;color:#f2f5fa;letter-spacing:-0.066px;">WebForm1.aspx.cs</span>
<div class="a" style="left:519px;top:95px;width:144.3px;height:20px;background:linear-gradient(180deg,#a9b9d8 0,#8fa3ca 1.500px,#8a9ec6 50%,#8599c2 100%);border-radius:2px 2px 0 0"></div>
<svg class="a" style="left:522.7px;top:97.5px" width="15" height="14" viewBox="0 0 15 14"><rect x="1" y="1" width="13" height="12" fill="#fdfdfb" stroke="#4c4c44" stroke-width="1.200"/><rect x="1.500" y="1.500" width="12" height="2" fill="#e9dc8a"/><rect x="3" y="5" width="3.500" height="3" fill="none" stroke="#555" stroke-width=".9"/><path d="M8 5.500h4.500M8 7.500h4.500M3 10.500h9.500" stroke="#555" stroke-width=".9"/></svg>
<span class="t" style="left:541px;top:96.5px;height:16px;line-height:16px;font-size:11px;color:#f2f5fa;letter-spacing:-0.038px;">WebForm1.aspx</span>
<svg class="a" style="left:912px;top:98.5px" width="10" height="9" viewBox="0 0 10 9"><path d="M1 .8l8 7.400M9 .8l-8 7.400" stroke="#e6ebf5" stroke-width="1.300"/></svg>
<svg class="a" style="left:929.5px;top:104.5px" width="8" height="5" viewBox="0 0 8 5"><path d="M0 0h7.500L3.750 4.200z" fill="#e6ebf5"/></svg>
<div class="a" style="left:31px;top:114.3px;width:909px;height:558.2px;background:linear-gradient(180deg,#fdf2b8 0,#fdf2b8 6px,#fdeeb0 7px);border-radius:0 3px 3px 3px"></div>
<div class="a" style="left:31px;top:118.3px;width:909px;height:550.5px;background:#fff"></div>
<div class="a" style="left:31.5px;top:118px;width:907.5px;height:21.8px;background:#fdfdfe;border:1.700px solid #3a3f4a"></div>
<div class="a" style="left:484.8px;top:119px;width:1.6px;height:20px;background:#3e4450"></div>
<svg class="a" style="left:36px;top:120.5px" width="16" height="15" viewBox="0 0 16 15"><path d="M7 6.500l3 3.500M10.500 7.500l1.500-1.500" stroke="#2a3a78" stroke-width="1.100" fill="none"/><path d="M1 5l4.500-4 3.500 3-4.500 4z" fill="#ecd65c" stroke="#8f7d1e" stroke-width=".8"/><path d="M11 5.500l2.500-2.500 1.500 2-2.500 2.500z" fill="#e070d8" stroke="#7a2a80" stroke-width=".7"/><path d="M9.500 11.500l2.500-2.500 2.500 2.500-2.500 2.500z" fill="#9ab8e8" stroke="#2a4a90" stroke-width=".8"/></svg>
<span class="t" style="left:52.5px;top:121px;height:16px;line-height:16px;font-size:11px;color:#000;letter-spacing:-0.126px;">aspnet_data_cache.WebForm2</span>
<svg class="a" style="left:476.5px;top:127.1px" width="6" height="4" viewBox="0 0 6 4"><path d="M0 0h6l-3 3.6z" fill="#1b1b1b"/></svg>
<svg class="a" style="left:489px;top:120.5px" width="17" height="17" viewBox="0 0 17 17"><g transform="translate(2.700,.7)"><path d="M9.300 .3l4 2.500v4.800l-4 2.500-4-2.500V2.800z" fill="#c455cc" stroke="#74207e" stroke-width=".6"/><path d="M5.300 2.800l4-2.500 4 2.500-4 2.300z" fill="#efbdf2"/><path d="M9.300 5.100v5l4-2.500V2.800z" fill="#83268e"/><path d="M5.300 2.800l4 2.300v5l-4-2.500z" fill="#cf6ad6"/></g><circle cx="4" cy="9.300" r="2.300" fill="#f4e050" stroke="#9a8a20" stroke-width=".7"/><path d="M3.800 11.500v4M3.800 13.500h1.800" stroke="#c8b030" stroke-width="1.500"/><path d="M2.500 5h3M3 3.500h2.500" stroke="#aaa" stroke-width=".7"/></svg>
<span class="t" style="left:506.7px;top:121px;height:16px;line-height:16px;font-size:11px;color:#000;letter-spacing:-0.124px;">Page_Load(object sender, EventArgs e)</span>
<svg class="a" style="left:930px;top:127.1px" width="6" height="4" viewBox="0 0 6 4"><path d="M0 0h6l-3 3.6z" fill="#1b1b1b"/></svg>
<div class="a" style="left:31.5px;top:139.4px;width:892.5px;height:513px;overflow:hidden"><div class="a" style="left:0px;top:0px;width:20.3px;height:513px;background:#efeff1"></div>
<div class="a" style="left:89.5px;top:360.54px;width:803px;height:20.22px;background:#e9e9f1"></div>
<div class="a" style="left:176.5px;top:310.6px;transform-origin:0 100%;transform:rotate(-32.500deg);font-size:88px;line-height:88px;height:88px;letter-spacing:14.500px;color:#1e1e28;-webkit-text-stroke:1.600px #1e1e28;opacity:.075;white-space:pre">MehmetX.com</div>
<div class="a" style="left:68.7px;top:-0.7px;width:5.8px;height:42.44px;background:#6fdc6f"></div>
<div class="a" style="left:68.7px;top:126.62px;width:5.8px;height:84.88px;background:#6fdc6f"></div>
<div class="a" style="left:68.7px;top:211.5px;width:5.8px;height:169.76px;background:#ffe75e"></div>
<div class="a" style="left:83.7px;top:-0.7px;width:1px;height:41.44px;background:#a5a5a5"></div>
<div class="a" style="left:83.7px;top:39.74px;width:5px;height:1px;background:#a5a5a5"></div>
<div class="a" style="left:83.7px;top:72.96px;width:1px;height:466.84px;background:#a5a5a5"></div>
<div class="a" style="left:83.7px;top:486.06px;width:5px;height:1px;background:#a5a5a5"></div>
<div class="a" style="left:83.7px;top:510.58px;width:5px;height:1px;background:#a5a5a5"></div>
<div class="a" style="left:95px;top:510.9px;width:2px;height:2px;background:#333"></div>
<div class="a" style="left:78.5px;top:68.16px;width:10.500px;height:10.500px;background:#fff;border:1px solid #8a8a8a"><div class="a" style="left:1.800px;top:3.600px;width:5px;height:1.300px;background:#333"></div></div>
<div class="a" style="left:78.5px;top:110.6px;width:10.500px;height:10.500px;background:#fff;border:1px solid #8a8a8a"><div class="a" style="left:1.800px;top:3.600px;width:5px;height:1.300px;background:#333"></div></div>
<div class="a" style="left:78.5px;top:153.04px;width:10.500px;height:10.500px;background:#fff;border:1px solid #8a8a8a"><div class="a" style="left:1.800px;top:3.600px;width:5px;height:1.300px;background:#333"></div></div>
<div class="ln" style="top:-0.7px;left:28.5px">7</div>
<div class="code" style="top:-0.7px;left:90.8px"><span class="k">using</span> System.Data;</div>
<div class="ln" style="top:20.52px;left:28.5px">8</div>
<div class="code" style="top:20.52px;left:90.8px"><span class="k">using</span> System.Data.SqlClient;</div>
<div class="ln" style="top:41.74px;left:28.5px">9</div>
<div class="ln" style="top:62.96px;left:28.5px">10</div>
<div class="code" style="top:62.96px;left:90.8px"><span class="k">namespace</span> aspnet_data_cache</div>
<div class="ln" style="top:84.18px;left:28.5px">11</div>
<div class="code" style="top:84.18px;left:90.8px">{</div>
<div class="ln" style="top:105.4px;left:28.5px">12</div>
<div class="code" style="top:105.4px;left:90.8px">    <span class="k">public</span> <span class="k">partial</span> <span class="k">class</span> <span class="c">WebForm2</span> : System.Web.UI.<span class="c">Page</span></div>
<div class="ln" style="top:126.62px;left:28.5px">13</div>
<div class="code" style="top:126.62px;left:90.8px">    {</div>
<div class="ln" style="top:147.84px;left:28.5px">14</div>
<div class="code" style="top:147.84px;left:90.8px">        <span class="k">protected</span> <span class="k">void</span> Page_Load(<span class="k">object</span> sender, <span class="c">EventArgs</span> e)</div>
<div class="ln" style="top:169.06px;left:28.5px">15</div>
<div class="code" style="top:169.06px;left:90.8px">        {</div>
<div class="ln" style="top:190.28px;left:28.5px">16</div>
<div class="code" style="top:190.28px;left:90.8px">            <span class="c">DataTable</span> dt;</div>
<div class="ln" style="top:211.5px;left:28.5px">17</div>
<div class="code" style="top:211.5px;left:90.8px">            <span class="k">if</span> (Page.Cache[<span class="s">"chUrun"</span>] == <span class="k">null</span>)</div>
<div class="ln" style="top:232.72px;left:28.5px">18</div>
<div class="code" style="top:232.72px;left:90.8px">            {</div>
<div class="ln" style="top:253.94px;left:28.5px">19</div>
<div class="code" style="top:253.94px;left:90.8px">                <span class="c">SqlDataAdapter</span> da = <span class="k">new</span> <span class="c">SqlDataAdapter</span>(<span class="s">"SELECT * FROM Urunler",</span></div>
<div class="code" style="top:275.16px;left:90.8px"><span class="s">"Server=.;Database=Northwind;Integrated Security=SSPI"</span>);</div>
<div class="ln" style="top:296.38px;left:28.5px">20</div>
<div class="code" style="top:296.38px;left:90.8px">                dt = <span class="k">new</span> <span class="c">DataTable</span>();</div>
<div class="ln" style="top:317.6px;left:28.5px">21</div>
<div class="code" style="top:317.6px;left:90.8px">                da.Fill(dt);</div>
<div class="ln" style="top:338.82px;left:28.5px">22</div>
<div class="ln" style="top:360.04px;left:28.5px">23</div>
<div class="code" style="top:360.04px;left:90.8px">                Page.Cache.Insert(<span class="s">"chUrun"</span>, dt, <span class="k">null</span>, <span class="c">DateTime</span>.Now.);</div>
<div class="ln" style="top:381.26px;left:28.5px">24</div>
<div class="ln" style="top:402.48px;left:28.5px">25</div>
<div class="ln" style="top:423.7px;left:28.5px">26</div>
<div class="ln" style="top:444.92px;left:28.5px">27</div>
<div class="ln" style="top:466.14px;left:28.5px">28</div>
<div class="code" style="top:466.14px;left:90.8px">        }</div>
<div class="ln" style="top:487.36px;left:28.5px">29</div>
<div class="code" style="top:487.36px;left:90.8px">    }</div>
<div class="ln" style="top:508.58px;left:28.5px">30</div>
<div class="code" style="top:508.58px;left:90.8px">}</div>
<div class="a" style="left:689.7px;top:362.04px;width:1.3px;height:17.5px;background:#000"></div>
<svg class="a" style="left:880.5px;top:260.1px" width="11" height="9" viewBox="0 0 11 9"><path d="M1.500 1.500h5.500c3.500 0 3.500 5 0 5h-3" fill="none" stroke="#2f7fd0" stroke-width="1.400"/><path d="M5.500 4l-3 2.500 3 2.300z" fill="#2f7fd0"/></svg></div>
<div class="a" style="left:924px;top:139.4px;width:15.5px;height:513px;background:linear-gradient(90deg,#e6e6e8 0,#f3f3f4 40%,#f4f4f5 100%)"></div>
<div class="a" style="left:924px;top:139.8px;width:15.5px;height:15.7px;background:linear-gradient(180deg,#f2f2f3,#d9d9db);border:1px solid #b8b8bc"></div>
<svg class="a" style="left:926.5px;top:141.5px" width="11" height="12" viewBox="0 0 11 12"><path d="M.5 4.700h10M.5 7.300h10" stroke="#111" stroke-width=".9"/><path d="M5.500 .5v3.800M5.500 11.500V7.700" stroke="#111" stroke-width="1.100"/><path d="M3.200 2.800l2.300-2.600 2.300 2.600zM3.200 9.200l2.300 2.600 2.300-2.600z" fill="#111"/></svg>
<svg class="a" style="left:928.8px;top:161.5px" width="6.5" height="4" viewBox="0 0 6.5 4"><path d="M0 4l3.250-4L6.500 4z" fill="#7d828c"/></svg>
<svg class="a" style="left:928.8px;top:643px" width="6.5" height="4" viewBox="0 0 6.5 4"><path d="M0 0l3.250 4L6.500 0z" fill="#6d727c"/></svg>
<div class="a" style="left:924.5px;top:210.7px;width:5px;height:21.3px;background:#6fdc6f"></div>
<div class="a" style="left:924.5px;top:254.5px;width:5px;height:6.5px;background:#6fdc6f"></div>
<div class="a" style="left:924.5px;top:276px;width:5px;height:13px;background:#6fdc6f"></div>
<div class="a" style="left:924.5px;top:289px;width:5px;height:26px;background:#ffe75e"></div>
<div class="a" style="left:924.5px;top:315px;width:5px;height:28.5px;background:#6fdc6f"></div>
<div class="a" style="left:924.5px;top:343.5px;width:5px;height:61px;background:#ffe75e"></div>
<div class="a" style="left:929.5px;top:215.5px;width:9px;height:190.5px;background:linear-gradient(90deg,#f4f4f5 0,#dfdfe2 45%,#cfcfd3 100%);border:1px solid #9a9aa0;border-radius:1px"></div>
<div class="a" style="left:929.8px;top:307px;width:6.5px;height:6.5px;background:repeating-linear-gradient(180deg,#222 0,#222 1.300px,rgba(0,0,0,0) 1.300px,rgba(0,0,0,0) 2.500px)"></div>
<div class="a" style="left:936px;top:386px;width:3.2px;height:4px;background:#0c0cc0"></div>
<div class="a" style="left:31.5px;top:652.4px;width:908px;height:16.4px;background:#f1f1f2;border-top:1px solid #e2e2e4"></div>
<div class="a" style="left:31.5px;top:652.4px;width:55px;height:16.4px;background:#fcfcfc;border-right:1px solid #d0d0d4"></div>
<span class="t" style="left:34.6px;top:653.3px;height:16px;line-height:16px;font-size:11px;color:#000;letter-spacing:-0.300px;">133 %</span>
<svg class="a" style="left:78.4px;top:659.3px" width="6" height="4" viewBox="0 0 6 4"><path d="M0 0h6l-3 3.6z" fill="#1b1b1b"/></svg>
<svg class="a" style="left:92.5px;top:657.5px" width="4" height="7" viewBox="0 0 4 7"><path d="M4 0L0 3.500 4 7z" fill="#6d727c"/></svg>
<svg class="a" style="left:913.8px;top:657.8px" width="4" height="7" viewBox="0 0 4 7"><path d="M0 0l4 3.500L0 7z" fill="#5f646e"/></svg>
<div class="a" style="left:924px;top:653px;width:16px;height:15.8px;background:#fafafb"></div>
<div class="a" style="left:719.8px;top:338.3px;width:177.7px;height:162.7px;background:#fff;border:1px solid #a9a9ad;box-shadow:1px 1px 2px rgba(0,0,0,.25)"></div>
<div class="a" style="left:881px;top:339.3px;width:15.5px;height:160.7px;background:#f3f3f4"></div>
<svg class="a" style="left:886px;top:345.3px" width="5.5" height="3.5" viewBox="0 0 5.5 3.5"><path d="M0 3.500l2.750-3.500L5.500 3.500z" fill="#8a8e97"/></svg>
<svg class="a" style="left:886px;top:489.8px" width="5.5" height="3.5" viewBox="0 0 5.5 3.5"><path d="M0 0l2.750 3.500L5.500 0z" fill="#6f747e"/></svg>
<div class="a" style="left:882.3px;top:355px;width:13px;height:27.5px;background:linear-gradient(90deg,#f5f5f6 0,#e2e2e5 50%,#d0d0d4 100%);border:1px solid #8e8e96;border-radius:2px"></div>
<div class="a" style="left:885.5px;top:365px;width:6.5px;height:6.5px;background:repeating-linear-gradient(180deg,#444 0,#444 1.100px,rgba(0,0,0,0) 1.100px,rgba(0,0,0,0) 2.400px)"></div>
<div class="a" style="left:739.5px;top:410.6px;width:141.5px;height:17.7px;background:linear-gradient(180deg,#fff8dc,#ffeeb5);border:1px solid #e6cf82;border-radius:1px"></div>
<svg class="a" style="left:722.8px;top:342.3px" width="14" height="12" viewBox="0 0 14 12"><path d="M.2 4h4.500M1.600 5.600h3.200M.2 7.200h4.500" stroke="#9c9ca4" stroke-width=".9"/><path d="M9.300 .3l4 2.500v4.800l-4 2.500-4-2.500V2.800z" fill="#c455cc" stroke="#74207e" stroke-width=".6"/><path d="M5.300 2.800l4-2.500 4 2.500-4 2.300z" fill="#efbdf2"/><path d="M9.300 5.100v5l4-2.500V2.800z" fill="#83268e"/><path d="M5.300 2.800l4 2.300v5l-4-2.500z" fill="#cf6ad6"/></svg>
<span class="t" style="left:741.7px;top:340.3px;height:16px;line-height:16px;font-size:11px;color:#000;letter-spacing:0.141px;">Add</span>
<svg class="a" style="left:722.8px;top:360.15px" width="14" height="12" viewBox="0 0 14 12"><path d="M.2 4h4.500M1.600 5.600h3.200M.2 7.200h4.500" stroke="#9c9ca4" stroke-width=".9"/><path d="M9.300 .3l4 2.500v4.800l-4 2.500-4-2.500V2.800z" fill="#c455cc" stroke="#74207e" stroke-width=".6"/><path d="M5.300 2.800l4-2.500 4 2.500-4 2.300z" fill="#efbdf2"/><path d="M9.300 5.100v5l4-2.500V2.800z" fill="#83268e"/><path d="M5.300 2.800l4 2.300v5l-4-2.500z" fill="#cf6ad6"/></svg>
<span class="t" style="left:741.7px;top:358.15px;height:16px;line-height:16px;font-size:11px;color:#000;letter-spacing:0.051px;">AddDays</span>
<svg class="a" style="left:722.8px;top:378px" width="14" height="12" viewBox="0 0 14 12"><path d="M.2 4h4.500M1.600 5.600h3.200M.2 7.200h4.500" stroke="#9c9ca4" stroke-width=".9"/><path d="M9.300 .3l4 2.500v4.800l-4 2.500-4-2.500V2.800z" fill="#c455cc" stroke="#74207e" stroke-width=".6"/><path d="M5.300 2.800l4-2.500 4 2.500-4 2.300z" fill="#efbdf2"/><path d="M9.300 5.100v5l4-2.500V2.800z" fill="#83268e"/><path d="M5.300 2.800l4 2.300v5l-4-2.500z" fill="#cf6ad6"/></svg>
<span class="t" style="left:741.7px;top:376px;height:16px;line-height:16px;font-size:11px;color:#000;letter-spacing:0.197px;">AddHours</span>
<svg class="a" style="left:722.8px;top:395.85px" width="14" height="12" viewBox="0 0 14 12"><path d="M.2 4h4.500M1.600 5.600h3.200M.2 7.200h4.500" stroke="#9c9ca4" stroke-width=".9"/><path d="M9.300 .3l4 2.500v4.800l-4 2.500-4-2.500V2.800z" fill="#c455cc" stroke="#74207e" stroke-width=".6"/><path d="M5.300 2.800l4-2.500 4 2.500-4 2.300z" fill="#efbdf2"/><path d="M9.300 5.100v5l4-2.500V2.800z" fill="#83268e"/><path d="M5.300 2.800l4 2.300v5l-4-2.500z" fill="#cf6ad6"/></svg>
<span class="t" style="left:741.7px;top:393.85px;height:16px;line-height:16px;font-size:11px;color:#000;letter-spacing:0.201px;">AddMilliseconds</span>
<svg class="a" style="left:722.8px;top:413.7px" width="14" height="12" viewBox="0 0 14 12"><path d="M.2 4h4.500M1.600 5.600h3.200M.2 7.200h4.500" stroke="#9c9ca4" stroke-width=".9"/><path d="M9.300 .3l4 2.500v4.800l-4 2.500-4-2.500V2.800z" fill="#c455cc" stroke="#74207e" stroke-width=".6"/><path d="M5.300 2.800l4-2.500 4 2.500-4 2.300z" fill="#efbdf2"/><path d="M9.300 5.100v5l4-2.500V2.800z" fill="#83268e"/><path d="M5.300 2.800l4 2.300v5l-4-2.500z" fill="#cf6ad6"/></svg>
<span class="t" style="left:741.7px;top:411.7px;height:16px;line-height:16px;font-size:11px;color:#000;letter-spacing:0.291px;">AddMinutes</span>
<svg class="a" style="left:722.8px;top:431.55px" width="14" height="12" viewBox="0 0 14 12"><path d="M.2 4h4.500M1.600 5.600h3.200M.2 7.200h4.500" stroke="#9c9ca4" stroke-width=".9"/><path d="M9.300 .3l4 2.500v4.800l-4 2.500-4-2.500V2.800z" fill="#c455cc" stroke="#74207e" stroke-width=".6"/><path d="M5.300 2.800l4-2.500 4 2.500-4 2.300z" fill="#efbdf2"/><path d="M9.300 5.100v5l4-2.500V2.800z" fill="#83268e"/><path d="M5.300 2.800l4 2.300v5l-4-2.500z" fill="#cf6ad6"/></svg>
<span class="t" style="left:741.7px;top:429.55px;height:16px;line-height:16px;font-size:11px;color:#000;letter-spacing:0.300px;">AddMonths</span>
<svg class="a" style="left:722.8px;top:449.4px" width="14" height="12" viewBox="0 0 14 12"><path d="M.2 4h4.500M1.600 5.600h3.200M.2 7.200h4.500" stroke="#9c9ca4" stroke-width=".9"/><path d="M9.300 .3l4 2.500v4.800l-4 2.500-4-2.500V2.800z" fill="#c455cc" stroke="#74207e" stroke-width=".6"/><path d="M5.300 2.800l4-2.500 4 2.500-4 2.300z" fill="#efbdf2"/><path d="M9.300 5.100v5l4-2.500V2.800z" fill="#83268e"/><path d="M5.300 2.800l4 2.300v5l-4-2.500z" fill="#cf6ad6"/></svg>
<span class="t" style="left:741.7px;top:447.4px;height:16px;line-height:16px;font-size:11px;color:#000;letter-spacing:-0.089px;">AddSeconds</span>
<svg class="a" style="left:722.8px;top:467.25px" width="14" height="12" viewBox="0 0 14 12"><path d="M.2 4h4.500M1.600 5.600h3.200M.2 7.200h4.500" stroke="#9c9ca4" stroke-width=".9"/><path d="M9.300 .3l4 2.500v4.800l-4 2.500-4-2.500V2.800z" fill="#c455cc" stroke="#74207e" stroke-width=".6"/><path d="M5.300 2.800l4-2.500 4 2.500-4 2.300z" fill="#efbdf2"/><path d="M9.300 5.100v5l4-2.500V2.800z" fill="#83268e"/><path d="M5.300 2.800l4 2.300v5l-4-2.500z" fill="#cf6ad6"/></svg>
<span class="t" style="left:741.7px;top:465.25px;height:16px;line-height:16px;font-size:11px;color:#000;letter-spacing:0.146px;">AddTicks</span>
<svg class="a" style="left:722.8px;top:485.1px" width="14" height="12" viewBox="0 0 14 12"><path d="M.2 4h4.500M1.600 5.600h3.200M.2 7.200h4.500" stroke="#9c9ca4" stroke-width=".9"/><path d="M9.300 .3l4 2.500v4.800l-4 2.500-4-2.500V2.800z" fill="#c455cc" stroke="#74207e" stroke-width=".6"/><path d="M5.300 2.800l4-2.500 4 2.500-4 2.300z" fill="#efbdf2"/><path d="M9.300 5.100v5l4-2.500V2.800z" fill="#83268e"/><path d="M5.300 2.800l4 2.300v5l-4-2.500z" fill="#cf6ad6"/></svg>
<span class="t" style="left:741.7px;top:483.1px;height:16px;line-height:16px;font-size:11px;color:#000;letter-spacing:-0.039px;">AddYears</span>
<div class="a" style="left:328px;top:412px;width:392.5px;height:89.5px;background:linear-gradient(180deg,#ffffff 0,#f3f5fa 55%,#e6eaf3 100%);border:1px solid #7a7a80;border-radius:2.500px;box-shadow:1.500px 1.500px 2px rgba(0,0,0,.3)"></div>
<span class="t" style="left:332px;top:413.2px;height:16px;line-height:16px;font-size:11px;color:#000;letter-spacing:0.084px;">DateTime DateTime.AddMinutes(double value)</span>
<span class="t" style="left:332px;top:427.8px;height:16px;line-height:16px;font-size:11px;color:#000;letter-spacing:0.041px;">Returns a new System.DateTime that adds the specified number of minutes to</span>
<span class="t" style="left:332px;top:442.2px;height:16px;line-height:16px;font-size:11px;color:#000;letter-spacing:0.069px;">the value of this instance.</span>
<span class="t" style="left:332px;top:470.7px;height:16px;line-height:16px;font-size:11px;color:#000;letter-spacing:-0.216px;">Exceptions:</span>
<span class="t" style="left:342.7px;top:484.3px;height:16px;line-height:16px;font-size:11px;color:#000;letter-spacing:0.045px;">System.ArgumentOutOfRangeException</span>
<div class="a" style="left:100px;top:521.5px;width:880px;height:86px;background:linear-gradient(180deg,#ffffff 0,#f3f5fa 55%,#e6eaf3 100%);border:1px solid #7a7a80;border-radius:2.500px;box-shadow:1.500px 1.500px 2px rgba(0,0,0,.3)"></div>
<svg class="a" style="left:109.8px;top:529px" width="8.5" height="7.5" viewBox="0 0 8.5 7.5"><path d="M0 7.500L4.500 0 9 7.500z" fill="#111"/></svg>
<span class="t" style="left:123px;top:524.8px;height:16px;line-height:16px;font-size:11px;color:#000;letter-spacing:0.161px;">3 of 5</span>
<svg class="a" style="left:155.8px;top:529.3px" width="8.5" height="7.5" viewBox="0 0 8.5 7.5"><path d="M0 0h9L4.500 7.500z" fill="#111"/></svg>
<span class="t" style="left:171.5px;top:524.8px;height:16px;line-height:16px;font-size:11px;color:#000;letter-spacing:0.002px;"><span class="kw">void</span> Cache.Insert(<span class="kw">string</span> key, <span class="kw">object</span> value, System.Web.Caching.<span class="ty">CacheDependency</span> dependencies, <b><span class="ty" style="color:#1f7f9f">DateTime</span> absoluteExpiration</b>, <span class="ty">TimeSpan</span> slidingExpiration)</span>
<span class="t" style="left:170px;top:542.7px;height:16px;line-height:16px;font-size:11px;color:#000;letter-spacing:0.022px;">Inserts an object into the System.Web.Caching.Cache with dependencies and expiration policies.</span>
<span class="t" style="left:170px;top:560.4px;height:16px;line-height:16px;font-size:11px;color:#000;letter-spacing:0.043px;font-weight:bold;font-style:italic;">absoluteExpiration:</span>
<span class="t" style="left:278px;top:560.4px;height:16px;line-height:16px;font-size:11px;color:#000;letter-spacing:-0.043px;font-style:italic;">The time at which the inserted object expires and is removed from the cache. To avoid possible issues with local time such as changes from</span>
<span class="t" style="left:278px;top:575.1px;height:16px;line-height:16px;font-size:11px;color:#000;letter-spacing:0.033px;font-style:italic;">standard time to daylight saving time, use System.DateTime.UtcNow rather than System.DateTime.Now for this parameter value. If you are</span>
<span class="t" style="left:278px;top:589.7px;height:16px;line-height:16px;font-size:11px;color:#000;letter-spacing:0.007px;font-style:italic;">using absolute expiration, the slidingExpiration parameter must be System.Web.Caching.Cache.NoSlidingExpiration.</span>
<div class="a" style="left:942.3px;top:93px;width:18px;height:119px;background:linear-gradient(90deg,#2d3f68 0,#3a4f82 22%,#43588c 50%,#465b90 100%)"></div><svg class="a" style="left:949.5px;top:96.5px" width="12" height="13" viewBox="0 0 12 13"><rect x=".5" y=".5" width="12" height="11.500" fill="#f3f5f9" stroke="#9aa6bf" stroke-width=".8"/><circle cx="6.500" cy="5" r="2.600" fill="none" stroke="#777" stroke-width="1.100"/><path d="M4.500 7l-2 2.500" stroke="#777" stroke-width="1.100"/></svg><span class="t" style="left:962.8px;top:116px;height:14px;line-height:14px;font-size:11.2px;color:#fff;letter-spacing:0.088px;transform-origin:0 0;transform:rotate(90deg);">Solution Navigator</span>
<div class="a" style="left:942.3px;top:213.5px;width:18px;height:105.5px;background:linear-gradient(90deg,#2d3f68 0,#3a4f82 22%,#43588c 50%,#465b90 100%)"></div><svg class="a" style="left:948.5px;top:214.5px" width="13" height="16" viewBox="0 0 13 16"><rect x="4" y="1" width="9" height="8" fill="#f2f4f8" stroke="#9aa6bf" stroke-width=".8"/><path d="M7 2l4 5" stroke="#d8b040" stroke-width="2.500"/><path d="M1 14l5-6" stroke="#8aa6e0" stroke-width="1.800"/><circle cx="6.500" cy="7.500" r="2" fill="#dfe6f5"/></svg><span class="t" style="left:962.8px;top:233px;height:14px;line-height:14px;font-size:11.2px;color:#fff;letter-spacing:-0.088px;transform-origin:0 0;transform:rotate(90deg);">Solution Explorer</span>
<div class="a" style="left:942.3px;top:320.5px;width:18px;height:75.5px;background:linear-gradient(90deg,#2d3f68 0,#3a4f82 22%,#43588c 50%,#465b90 100%)"></div><svg class="a" style="left:948.5px;top:322.5px" width="13" height="15" viewBox="0 0 13 15"><rect x="1" y="1.500" width="10" height="11" fill="#f2f4f8" stroke="#9aa6bf" stroke-width=".8"/><path d="M3 4.500h6M3 7h6M3 9.500h6" stroke="#667" stroke-width=".9"/><path d="M8 5l4 7" stroke="#d8a020" stroke-width="2.500"/></svg><span class="t" style="left:962.8px;top:341.7px;height:14px;line-height:14px;font-size:11.2px;color:#fff;letter-spacing:-0.100px;transform-origin:0 0;transform:rotate(90deg);">Properties</span>
<div class="a" style="left:31.5px;top:678.8px;width:65.8px;height:19px;background:linear-gradient(180deg,#425683,#3d507b);border-radius:0 0 2px 2px"></div>
<div class="a" style="left:100.3px;top:678.8px;width:58.4px;height:19px;background:linear-gradient(180deg,#425683,#3d507b);border-radius:0 0 2px 2px"></div>
<div class="a" style="left:161px;top:678.8px;width:90.8px;height:19px;background:linear-gradient(180deg,#425683,#3d507b);border-radius:0 0 2px 2px"></div>
<div class="a" style="left:254.3px;top:678.8px;width:122.2px;height:19px;background:linear-gradient(180deg,#425683,#3d507b);border-radius:0 0 2px 2px"></div>
<svg class="a" style="left:33.5px;top:680.5px" width="15" height="16" viewBox="0 0 15 16"><rect x="1" y="2.500" width="10.500" height="11.500" fill="#f4f1e6" stroke="#8a8266" stroke-width=".9"/><rect x="3.500" y="1" width="5.500" height="3" fill="#d8b44a" stroke="#7a6420" stroke-width=".6"/><path d="M3 7h6M3 9.500h4" stroke="#889" stroke-width=".9"/><circle cx="10.500" cy="11.500" r="3.800" fill="#e04a2a" stroke="#8a2010" stroke-width=".6"/><path d="M9 10l3 3M12 10l-3 3" stroke="#fff" stroke-width="1.200"/></svg>
<span class="t" style="left:52.5px;top:680.4px;height:16px;line-height:16px;font-size:11px;color:#e8edf6;letter-spacing:-0.163px;">Error List</span>
<svg class="a" style="left:103px;top:682px" width="12" height="12" viewBox="0 0 12 12"><rect x=".7" y=".7" width="10.500" height="10.500" fill="#f6f8fb" stroke="#c2cbe0" stroke-width="1.200"/><path d="M2.800 3.500h6.300M2.800 6h6.300M2.800 8.500h6.300" stroke="#3a4466" stroke-width="1.300"/></svg>
<span class="t" style="left:121.7px;top:680.4px;height:16px;line-height:16px;font-size:11px;color:#e8edf6;letter-spacing:0.300px;">Output</span>
<svg class="a" style="left:163px;top:681.5px" width="15" height="14" viewBox="0 0 15 14"><rect x=".7" y=".7" width="11" height="8.500" fill="#f6f8fb" stroke="#c2cbe0" stroke-width="1.100"/><path d="M2.500 3.200h7M2.500 5.500h7" stroke="#3a4466" stroke-width="1.200"/><path d="M4.500 9.500h3v3.500h-3zM9.500 9.500h3v3.500h-3z" fill="#222"/><rect x="7" y="10.500" width="3" height="1.800" fill="#444"/></svg>
<span class="t" style="left:182.3px;top:680.4px;height:16px;line-height:16px;font-size:11px;color:#e8edf6;letter-spacing:-0.272px;">Find Results 1</span>
<svg class="a" style="left:256.5px;top:681px" width="16" height="15" viewBox="0 0 16 15"><path d="M4 3h2.500v5.500H4zM8.500 3H11v5.500H8.500z" fill="#f0f2f6"/><rect x="6" y="4.500" width="3" height="2" fill="#dde"/><path d="M1 14l3.500-5" stroke="#e8c040" stroke-width="2"/><path d="M9 7.500l2.200 2 2.800-.5-1.300 2.500 1.300 2.500-2.800-.5-2.200 2-.4-2.800L6 11.500l2.600-1.200z" fill="#f2cf3a" stroke="#b08a14" stroke-width=".5"/></svg>
<span class="t" style="left:274.6px;top:680.4px;height:16px;line-height:16px;font-size:11px;color:#e8edf6;letter-spacing:-0.099px;">Find Symbol Results</span>
<div class="a" style="left:6px;top:699.5px;width:954px;height:20.5px;background:linear-gradient(180deg,#29385a 0,#263554 4px)"></div>
<span class="t" style="left:8px;top:701.3px;height:16px;line-height:16px;font-size:11px;color:#fff;letter-spacing:0.151px;">Build succeeded</span>
<span class="t" style="left:634px;top:701.3px;height:16px;line-height:16px;font-size:11px;color:#fff;letter-spacing:-0.006px;">Ln 23</span>
<span class="t" style="left:720px;top:701.3px;height:16px;line-height:16px;font-size:11px;color:#fff;letter-spacing:0.117px;">Col 68</span>
<span class="t" style="left:806px;top:701.3px;height:16px;line-height:16px;font-size:11px;color:#fff;letter-spacing:-0.072px;">Ch 68</span>
<span class="t" style="left:934px;top:701.3px;height:16px;line-height:16px;font-size:11px;color:#fff;letter-spacing:-0.281px;">INS</span>
<div class="a" style="left:339.200px;top:384.200px;width:37px;height:37px;border-radius:50%;background:radial-gradient(circle closest-side,#f0f008 0,#f0f008 84%,rgba(240,240,8,.55) 93%,rgba(240,240,8,0) 100%);mix-blend-mode:multiply"></div>
<svg class="a" style="left:356.3px;top:396.8px" width="7.5" height="15.5" viewBox="0 0 7.5 15.5"><path d="M.6 .7c1.900 0 3.100.4 3.100 1.800v10.500c0 1.400-1.200 1.800-3.100 1.800M6.900 .7c-1.900 0-3.200.4-3.200 1.800v10.500c0 1.400 1.300 1.800 3.200 1.800M2.200 7.800h3" fill="none" stroke="#1a1a1a" stroke-width="1.200"/></svg>
</body></html>
